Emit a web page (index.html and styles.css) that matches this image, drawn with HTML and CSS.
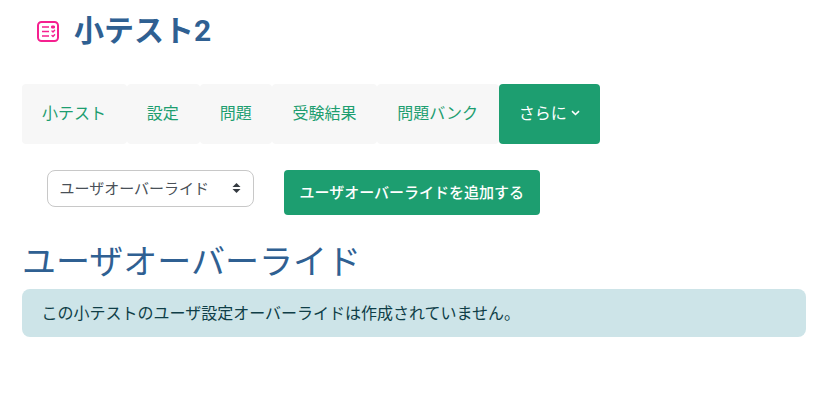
FILE: index.html
```html
<!DOCTYPE html>
<html lang="ja">
<head>
  <meta charset="UTF-8">
  <title>小テスト2</title>
  <link rel="stylesheet" href="styles.css">
</head>
<body>
  <header class="page-header">
    <svg class="quiz-icon" width="24" height="24" viewBox="0 0 24 24" fill="none" stroke="#f5208f" stroke-width="2" stroke-linecap="round" stroke-linejoin="round">
      <rect x="2" y="3" width="20" height="19" rx="3.5"/>
      <path d="M6 8h7M6 12.5h7M6 17h7" stroke-width="1.6" stroke-linecap="butt"/>
      <path d="M16 7h2.4v2H16z" fill="#f5208f" stroke-width="1"/>
      <path d="M16 12l1 1 1.6-1.8M16 16.5l1 1 1.6-1.8" stroke-width="1.4"/>
    </svg>
    <h1 class="page-title">小テスト2</h1>
  </header>

  <nav class="tabs">
    <a class="tab">小テスト</a>
    <a class="tab">設定</a>
    <a class="tab">問題</a>
    <a class="tab">受験結果</a>
    <a class="tab">問題バンク</a>
    <a class="tab active">さらに<svg class="caret" width="9" height="6" viewBox="0 0 9 6" fill="none" stroke="#fff" stroke-width="1.6"><path d="M1 1.2l3.5 3.3 3.5-3.3"/></svg></a>
  </nav>

  <div class="actions">
    <div class="select-box">ユーザオーバーライド
      <svg class="updown" width="9" height="12" viewBox="0 0 9 12" fill="#343a40"><path d="M0.5 5l4-4 4 4zM0.5 7l4 4 4-4z"/></svg>
    </div>
    <button class="btn-add">ユーザオーバーライドを追加する</button>
  </div>

  <h2 class="section-title">ユーザオーバーライド</h2>
  <div class="notice">この小テストのユーザ設定オーバーライドは作成されていません。</div>
</body>
</html>
```

FILE: styles.css
```css
body {
  font-family: Roboto, "Noto Sans CJK JP", sans-serif;
  margin: 0;
  padding: 0 27px 0 22px;
  color: #1d2125;
  background: #fff;
  font-size: 16px;
}
.page-header {
  display: flex;
  align-items: flex-start;
  gap: 14px;
  padding: 12px 0 0 14px;
  height: 84px;
  box-sizing: border-box;
}
.quiz-icon {
  margin-top: 7px;
}
.page-title {
  margin: 0;
  font-size: 30px;
  line-height: 38px;
  font-weight: 700;
  color: #2f6092;
}
.tabs {
  display: flex;
  height: 60px;
}
.tab {
  display: flex;
  align-items: center;
  padding: 0 20.8px 5px 20px;
  background: #f7f7f7;
  border-radius: 4px;
  color: #1d9e70;
}
.tab.active {
  padding-right: 20px;
  background: #1d9e70;
  color: #fff;
  gap: 4px;
}
.caret {
  margin-top: 3px;
}
.actions {
  display: flex;
  align-items: flex-start;
  gap: 30px;
  padding: 26px 0 0 25px;
}
.select-box {
  display: flex;
  align-items: center;
  justify-content: space-between;
  box-sizing: border-box;
  width: 207px;
  height: 37px;
  padding: 0 12px 2px 11.5px;
  border: 1px solid #c8c8c8;
  border-radius: 8px;
  font-size: 15px;
  color: #495057;
}
.btn-add {
  height: 45px;
  padding: 0 15.5px 2px;
  border: none;
  border-radius: 4px;
  background: #1d9e70;
  color: #fff;
  font-family: inherit;
  font-size: 15px;
  font-weight: 500;
}
.section-title {
  margin: 28px 0 0;
  font-size: 34px;
  line-height: 38px;
  font-weight: 400;
  color: #2f6092;
}
.notice {
  margin-top: 8px;
  padding: 0 20px 2px 19.5px;
  height: 48px;
  box-sizing: border-box;
  display: flex;
  align-items: center;
  border-radius: 8px;
  background: #cde4e8;
  color: #0f3e47;
}
```
